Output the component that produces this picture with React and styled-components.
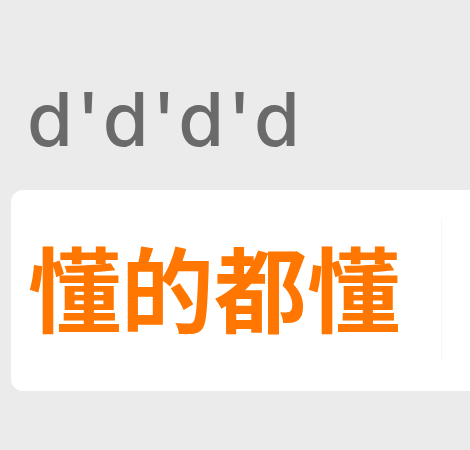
import React from "react";
import styled, { createGlobalStyle } from "styled-components";

const GlobalStyle = createGlobalStyle`
  html, body {
    margin: 0;
    padding: 0;
    background: #ebebeb;
    overflow: hidden;
  }
`;

const Page = styled.div`
  width: 470px;
  height: 450px;
  display: flex;
  flex-direction: column;
  padding-top: 78px;
  box-sizing: border-box;
`;

const Title = styled.h1`
  margin: 0 0 0 27px;
  font-family: "Inter", "Open Sans", sans-serif;
  font-weight: 500;
  font-size: 74px;
  line-height: 82px;
  letter-spacing: 4px;
  color: #6a6a6a;
`;

const Card = styled.div`
  margin: 30px -20px 0 11px;
  height: 201px;
  background: #ffffff;
  border-radius: 12px;
  display: flex;
  padding: 16px 0 0 17px;
  box-sizing: border-box;
`;

const Inner = styled.div`
  width: 413px;
  height: 142px;
  margin-top: 12px;
  border-right: 1px solid #f7f5f7;
  display: flex;
  align-items: center;
`;

const Slogan = styled.div`
  font-family: "Noto Sans CJK SC", sans-serif;
  font-weight: 700;
  font-size: 93px;
  line-height: 1;
  color: #ff7700;
  margin-left: 0;
  margin-top: -8px;
`;

export default function App() {
  return (
    <>
      <GlobalStyle />
      <Page>
        <Title>d'd'd'd</Title>
        <Card>
          <Inner>
            <Slogan>懂的都懂</Slogan>
          </Inner>
        </Card>
      </Page>
    </>
  );
}
